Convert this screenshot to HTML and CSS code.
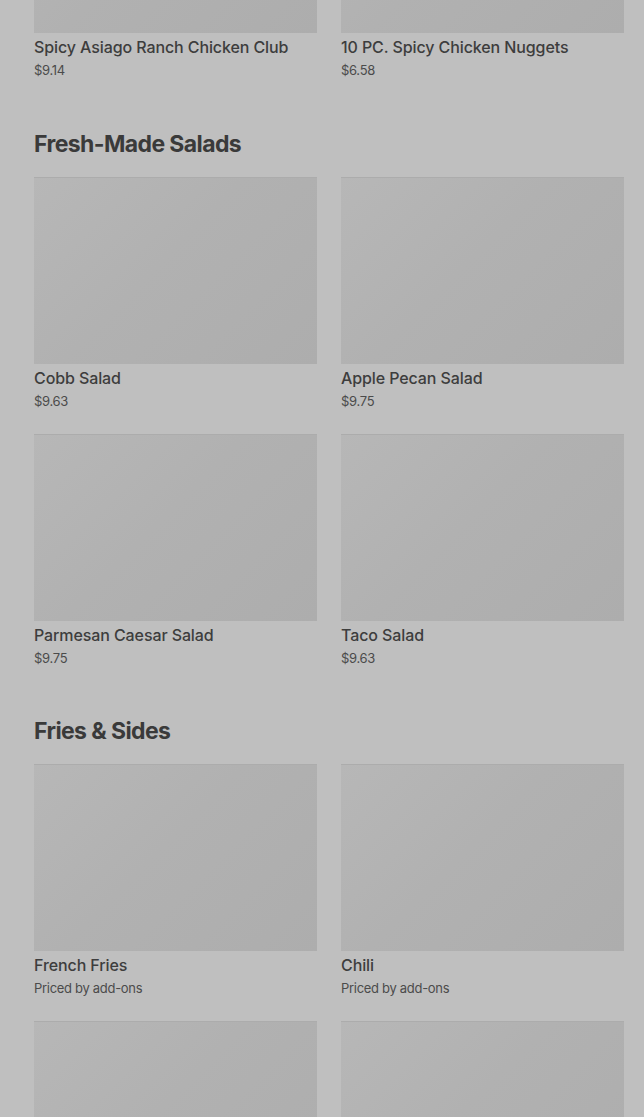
FILE: index.html
```html
<!DOCTYPE html>
<html lang="en">
<head>
<meta charset="utf-8">
<title>Menu</title>
<link rel="stylesheet" href="styles.css">
</head>
<body>
<main class="menu">
  <section class="section section-first">
    <div class="grid">
      <article class="card">
        <div class="thumb"></div>
        <h3 class="name">Spicy Asiago Ranch Chicken Club</h3>
        <p class="price">$9.14</p>
      </article>
      <article class="card">
        <div class="thumb"></div>
        <h3 class="name">10 PC. Spicy Chicken Nuggets</h3>
        <p class="price">$6.58</p>
      </article>
    </div>
  </section>

  <section class="section">
    <h2 class="heading">Fresh-Made Salads</h2>
    <div class="grid">
      <article class="card">
        <div class="thumb"></div>
        <h3 class="name">Cobb Salad</h3>
        <p class="price">$9.63</p>
      </article>
      <article class="card">
        <div class="thumb"></div>
        <h3 class="name">Apple Pecan Salad</h3>
        <p class="price">$9.75</p>
      </article>
      <article class="card">
        <div class="thumb"></div>
        <h3 class="name">Parmesan Caesar Salad</h3>
        <p class="price">$9.75</p>
      </article>
      <article class="card">
        <div class="thumb"></div>
        <h3 class="name">Taco Salad</h3>
        <p class="price">$9.63</p>
      </article>
    </div>
  </section>

  <section class="section">
    <h2 class="heading">Fries &amp; Sides</h2>
    <div class="grid">
      <article class="card">
        <div class="thumb"></div>
        <h3 class="name">French Fries</h3>
        <p class="price">Priced by add-ons</p>
      </article>
      <article class="card">
        <div class="thumb"></div>
        <h3 class="name">Chili</h3>
        <p class="price">Priced by add-ons</p>
      </article>
      <article class="card">
        <div class="thumb"></div>
      </article>
      <article class="card">
        <div class="thumb"></div>
      </article>
    </div>
  </section>
</main>
</body>
</html>
```

FILE: styles.css
```css
html, body {
  margin: 0;
  padding: 0;
  background: #bfbfbf;
}

body {
  font-family: Inter, "Liberation Sans", sans-serif;
  color: #3b3b3b;
  overflow: hidden;
}

.menu {
  padding: 0 20px 0 34px;
  display: flex;
  flex-direction: column;
  gap: 47.5px;
}

.section-first {
  margin-top: -154px;
}

.heading {
  margin: 0 0 17px;
  font-size: 23px;
  line-height: 32px;
  font-weight: 700;
  letter-spacing: -0.6px;
  color: #3a3a3a;
}

.grid {
  display: grid;
  grid-template-columns: 1fr 1fr;
  column-gap: 24px;
  row-gap: 23px;
}

.card {
  display: flex;
  flex-direction: column;
}

.thumb {
  height: 187px;
  background: linear-gradient(135deg, #b7b7b7 0%, #b1b1b1 45%, #adadad 100%);
  border-top: 1px solid #acacac;
  box-sizing: border-box;
}

.name {
  margin: 4px 0 0;
  font-size: 16px;
  line-height: 20px;
  font-weight: 500;
  letter-spacing: -0.1px;
  color: #3d3d3d;
}

.price {
  margin: 3px 0 0;
  font-size: 13px;
  line-height: 20px;
  font-weight: 400;
  letter-spacing: -0.3px;
  color: #4b4b4b;
}
```
